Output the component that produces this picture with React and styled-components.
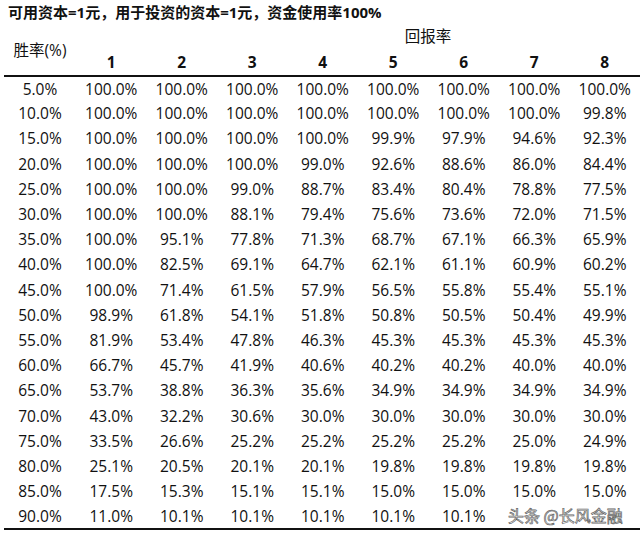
import styled, { createGlobalStyle } from "styled-components";

const GlobalStyle = createGlobalStyle`
  body {
    margin: 0;
    background: #ffffff;
  }
`;

const data = [
  ["5.0%", "100.0%", "100.0%", "100.0%", "100.0%", "100.0%", "100.0%", "100.0%", "100.0%"],
  ["10.0%", "100.0%", "100.0%", "100.0%", "100.0%", "100.0%", "100.0%", "100.0%", "99.8%"],
  ["15.0%", "100.0%", "100.0%", "100.0%", "100.0%", "99.9%", "97.9%", "94.6%", "92.3%"],
  ["20.0%", "100.0%", "100.0%", "100.0%", "99.0%", "92.6%", "88.6%", "86.0%", "84.4%"],
  ["25.0%", "100.0%", "100.0%", "99.0%", "88.7%", "83.4%", "80.4%", "78.8%", "77.5%"],
  ["30.0%", "100.0%", "100.0%", "88.1%", "79.4%", "75.6%", "73.6%", "72.0%", "71.5%"],
  ["35.0%", "100.0%", "95.1%", "77.8%", "71.3%", "68.7%", "67.1%", "66.3%", "65.9%"],
  ["40.0%", "100.0%", "82.5%", "69.1%", "64.7%", "62.1%", "61.1%", "60.9%", "60.2%"],
  ["45.0%", "100.0%", "71.4%", "61.5%", "57.9%", "56.5%", "55.8%", "55.4%", "55.1%"],
  ["50.0%", "98.9%", "61.8%", "54.1%", "51.8%", "50.8%", "50.5%", "50.4%", "49.9%"],
  ["55.0%", "81.9%", "53.4%", "47.8%", "46.3%", "45.3%", "45.3%", "45.3%", "45.3%"],
  ["60.0%", "66.7%", "45.7%", "41.9%", "40.6%", "40.2%", "40.2%", "40.0%", "40.0%"],
  ["65.0%", "53.7%", "38.8%", "36.3%", "35.6%", "34.9%", "34.9%", "34.9%", "34.9%"],
  ["70.0%", "43.0%", "32.2%", "30.6%", "30.0%", "30.0%", "30.0%", "30.0%", "30.0%"],
  ["75.0%", "33.5%", "26.6%", "25.2%", "25.2%", "25.2%", "25.2%", "25.0%", "24.9%"],
  ["80.0%", "25.1%", "20.5%", "20.1%", "20.1%", "19.8%", "19.8%", "19.8%", "19.8%"],
  ["85.0%", "17.5%", "15.3%", "15.1%", "15.1%", "15.0%", "15.0%", "15.0%", "15.0%"],
  ["90.0%", "11.0%", "10.1%", "10.1%", "10.1%", "10.1%", "10.1%", "", ""],
];

const cols = [1, 2, 3, 4, 5, 6, 7, 8];

export default function App() {
  return (
    <Page>
      <GlobalStyle />
      <Title>可用资本=1元，用于投资的资本=1元，资金使用率100%</Title>
      <Table>
        <colgroup>
          <col style={{ width: "72px" }} />
          {cols.map((c) => (
            <col key={c} />
          ))}
        </colgroup>
        <thead>
          <tr>
            <RateHead rowSpan={2}>胜率(%)</RateHead>
            <GroupHead colSpan={8}>回报率</GroupHead>
          </tr>
          <tr>
            {cols.map((c) => (
              <NumHead key={c}>{c}</NumHead>
            ))}
          </tr>
        </thead>
        <tbody>
          {data.map((row, i) => (
            <Row key={i} $last={i === data.length - 1}>
              {row.map((v, j) => (
                <Cell key={j}>{v}</Cell>
              ))}
            </Row>
          ))}
        </tbody>
      </Table>
      <Watermark>头条 @长风金融</Watermark>
    </Page>
  );
}

const Page = styled.div`
  position: relative;
  width: 640px;
  height: 540px;
  overflow: hidden;
  font-family: "Open Sans", "Noto Sans CJK SC", sans-serif;
  color: #111;
`;

const Title = styled.div`
  height: 24px;
  line-height: 24px;
  padding-left: 8px;
  font-size: 15px;
  font-weight: 700;
  color: #111;
`;

const Table = styled.table`
  margin-left: 4px;
  width: 636px;
  border-collapse: collapse;
  table-layout: fixed;
  font-size: 15.5px;
`;

const RateHead = styled.th`
  font-weight: 400;
  text-align: center;
  vertical-align: top;
  padding: 14px 0 0;
  line-height: 24px;
  border-bottom: 2px solid #111;
`;

const GroupHead = styled.th`
  height: 24px;
  line-height: 24px;
  font-weight: 400;
  text-align: center;
  padding: 0 0 0 140px;
`;

const NumHead = styled.th`
  height: 24.5px;
  line-height: 24px;
  font-weight: 700;
  text-align: center;
  vertical-align: top;
  padding: 2px 0 0;
  border-bottom: 2px solid #111;
`;

const Row = styled.tr`
  height: 25.2px;
  border-bottom: ${(p) => (p.$last ? "2px solid #111" : "none")};
`;

const Cell = styled.td`
  padding: 0;
  text-align: center;
  white-space: nowrap;
`;

const Watermark = styled.div`
  position: absolute;
  left: 508px;
  top: 505px;
  line-height: 20px;
  white-space: nowrap;
  font-size: 16px;
  font-family: "Noto Sans CJK SC", sans-serif;
  color: #ffffff;
  -webkit-text-stroke: 0.7px #666;
`;
